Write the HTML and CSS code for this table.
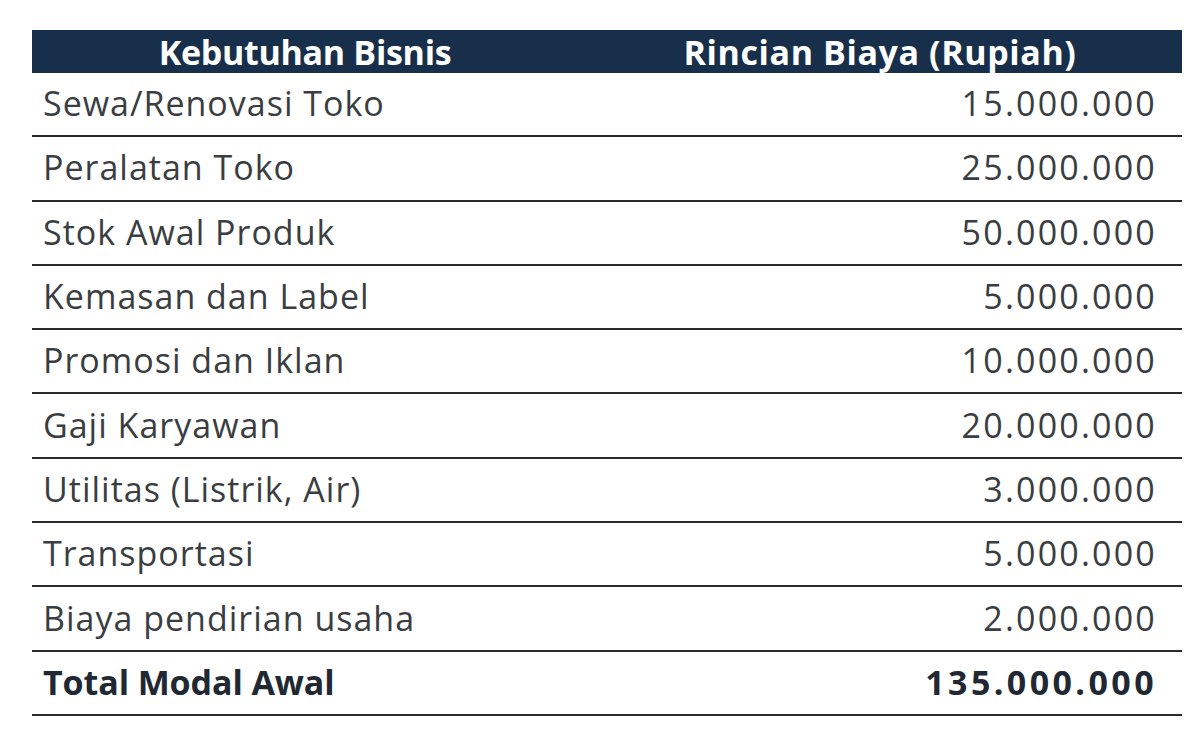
FILE: index.html
```html
<!DOCTYPE html>
<html>
<head>
<meta charset="utf-8">
<link rel="stylesheet" href="styles.css">
</head>
<body>
<table class="biaya">
  <thead>
    <tr><th class="c1">Kebutuhan Bisnis</th><th class="c2">Rincian Biaya (Rupiah)</th></tr>
  </thead>
  <tbody>
    <tr><td>Sewa/Renovasi Toko</td><td class="num">15.000.000</td></tr>
    <tr><td>Peralatan Toko</td><td class="num">25.000.000</td></tr>
    <tr><td>Stok Awal Produk</td><td class="num">50.000.000</td></tr>
    <tr><td>Kemasan dan Label</td><td class="num">5.000.000</td></tr>
    <tr><td>Promosi dan Iklan</td><td class="num">10.000.000</td></tr>
    <tr><td>Gaji Karyawan</td><td class="num">20.000.000</td></tr>
    <tr><td>Utilitas (Listrik, Air)</td><td class="num">3.000.000</td></tr>
    <tr><td>Transportasi</td><td class="num">5.000.000</td></tr>
    <tr><td>Biaya pendirian usaha</td><td class="num">2.000.000</td></tr>
    <tr class="total"><td>Total Modal Awal</td><td class="num">135.000.000</td></tr>
  </tbody>
</table>
</body>
</html>
```
FILE: styles.css
```css
html, body { margin: 0; padding: 0; background: #ffffff; }
body { padding: 30px 18px 0 32px; font-family: "Open Sans", "Liberation Sans", sans-serif; }
.biaya { width: 1150px; border-collapse: collapse; }
.biaya th {
  background: #172f4a; color: #ffffff; font-weight: 700; font-size: 34px;
  letter-spacing: -0.3px; height: 43px; padding: 0; text-align: center; line-height: 1;
}
.biaya th.c1 { width: 546px; }
.biaya th.c2 { letter-spacing: 0.6px; padding-left: 0; }
.biaya td {
  height: 60.3px; padding: 0 24px 2px 11px; font-size: 34px; color: #3a3d41;
  letter-spacing: 1px; border-bottom: 2px solid #2a2a2a; line-height: 1;
}
.biaya td.num { text-align: right; padding-right: 25px; letter-spacing: 2.2px; }
.biaya tr.total td { font-weight: 700; color: #1f2833; letter-spacing: -0.1px; }
.biaya tr.total td.num { letter-spacing: 3.4px; }
```
